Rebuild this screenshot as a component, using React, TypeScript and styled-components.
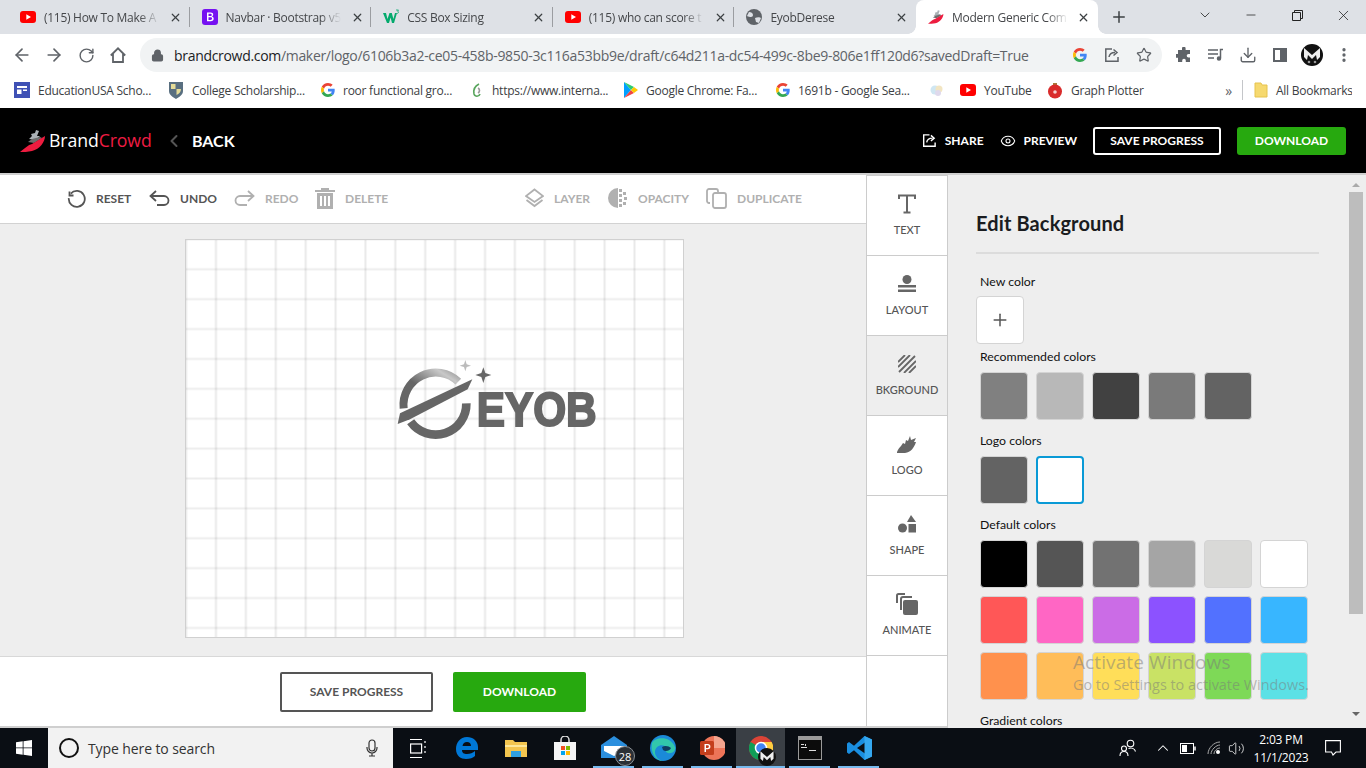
import React from "react";
import styled, { createGlobalStyle } from "styled-components";
import { ArrowLeft, ArrowRight, RotateCw, Lock, Star, MoreVertical, Download, ChevronDown, Minus, X, Plus, ChevronLeft, Eye, ChevronUp, Volume2 } from "lucide-react";

const Global = createGlobalStyle`
  html, body { margin: 0; padding: 0; width: 1366px; height: 768px; overflow: hidden; background: #fff; }
  * { box-sizing: border-box; }
  svg { display: block; flex: none; }
`;
const Page = styled.div`width:1366px;height:768px;display:flex;flex-direction:column;overflow:hidden;position:relative;font-family:"Lato","Liberation Sans",sans-serif;`;
const ui = `"Open Sans","Liberation Sans",sans-serif`;

/* ---------- browser chrome ---------- */
const TabStrip = styled.div`height:34px;flex:none;background:#dee1e6;display:flex;align-items:stretch;padding-left:8px;font-family:${ui};`;
const Tab = styled.div<{ $active?: boolean; $sep?: boolean }>`
  width:181.6px;flex:none;display:flex;align-items:center;padding:0 6px 0 12px;gap:8px;position:relative;
  color:#45474a;font-size:12px;letter-spacing:-.28px;
  background:${p => (p.$active ? "#fff" : "transparent")};
  border-radius:${p => (p.$active ? "8px 8px 0 0" : "0")};
  ${p => p.$sep ? `&::after{content:"";position:absolute;right:0;top:7px;height:20px;width:1px;background:#9b9da1;}` : ""}
  ${p => p.$active ? `
    &::before,&::after{content:"";position:absolute;bottom:0;width:8px;height:8px;}
    &::before{left:-8px;background:radial-gradient(circle at 0 0,transparent 7.5px,#fff 8px);}
    &::after{right:-8px;background:radial-gradient(circle at 100% 0,transparent 7.5px,#fff 8px);}
  ` : ""}
`;
const TabTitle = styled.span`flex:1;min-width:0;white-space:nowrap;overflow:hidden;-webkit-mask-image:linear-gradient(90deg,#000 82%,transparent);mask-image:linear-gradient(90deg,#000 82%,transparent);`;
const TabClose = styled.span`width:16px;height:16px;flex:none;display:flex;align-items:center;justify-content:center;color:#3c4043;`;
const NewTab = styled.div`width:28px;margin-left:7px;display:flex;align-items:center;justify-content:center;color:#3c4043;`;
const WinControls = styled.div`margin-left:auto;display:flex;`;
const WinBtn = styled.div`width:46px;display:flex;align-items:center;justify-content:center;color:#222;padding-bottom:4px;`;
const Toolbar = styled.div`height:40px;flex:none;background:#fff;display:flex;align-items:flex-start;padding:4px 6px 0;font-family:${ui};`;
const RoundBtn = styled.div`width:32px;height:34px;flex:none;display:flex;align-items:center;justify-content:center;color:#5f6368;`;
const UrlPill = styled.div`width:1022px;height:34px;margin:0 6px;flex:none;border-radius:17px;background:#f1f3f4;display:flex;align-items:center;padding-left:11px;padding-right:2px;`;
const UrlText = styled.span`margin-left:10px;flex:1;font-size:14px;letter-spacing:-.31px;color:#5f6368;white-space:nowrap;overflow:hidden;b{font-weight:400;color:#202124;}`;
const Bookmarks = styled.div`height:34px;flex:none;background:#fff;display:flex;align-items:center;padding:0 14px 2px;font-family:${ui};font-size:12px;letter-spacing:-.25px;color:#3c4043;`;
const Bookmark = styled.div<{ $w: number }>`width:${p => p.$w}px;flex:none;display:flex;align-items:center;gap:8px;white-space:nowrap;overflow:hidden;`;
const BarSep = styled.span`width:1px;height:20px;background:#c4c6c9;margin:0 11px 0 9px;`;
const More = styled.span`margin-left:auto;font-size:14px;color:#5f6368;margin-right:1px;`;

/* ---------- brand header ---------- */
const Header = styled.header`height:67px;flex:none;background:#000;border-bottom:2px solid #cfcfcf;display:flex;align-items:center;padding:0 20px;color:#fff;`;
const BrandMark = styled.div`display:flex;align-items:center;gap:3px;width:152px;`;
const BrandWord = styled.span`font-family:${ui};font-size:17.7px;font-weight:500;letter-spacing:-.1px;color:#fff;line-height:1;i{font-style:normal;color:#ee1c43;}`;
const BackLink = styled.div`display:flex;align-items:center;gap:8px;margin-left:-8px;font-size:16px;font-weight:700;`;
const HeadActions = styled.div`margin-left:auto;display:flex;align-items:center;`;
const HeadLink = styled.div`display:flex;align-items:center;gap:8px;font-size:12px;font-weight:700;margin-right:16px;`;
const HeadOutline = styled.div`width:128px;height:28px;border:2px solid #fff;border-radius:3px;display:flex;align-items:center;justify-content:center;font-size:12px;font-weight:700;margin-right:16px;`;
const HeadGreen = styled.div`width:109px;height:28px;background:#27a90f;border-radius:3px;display:flex;align-items:center;justify-content:center;font-size:12px;font-weight:700;`;

/* ---------- editor ---------- */
const Workspace = styled.div`flex:1;min-height:0;display:flex;`;
const EditorCol = styled.div`width:866px;flex:none;display:flex;flex-direction:column;`;
const EditBar = styled.div`height:49px;flex:none;background:#fff;border-bottom:1px solid #d2d2d2;display:flex;align-items:center;padding:0 0 2px 67px;`;
const EditBtn = styled.div<{ $off?: boolean; $w: number }>`width:${p => p.$w}px;flex:none;display:flex;align-items:center;gap:10px;font-size:12px;font-weight:700;color:${p => (p.$off ? "#b0b0b0" : "#555")};`;
const EditGap = styled.div`width:137px;flex:none;`;
const CanvasArea = styled.div`flex:1;min-height:0;background:#eee;display:flex;align-items:center;justify-content:center;padding:0 0 3px 3px;`;
const Canvas = styled.div`
  width:499px;height:399px;position:relative;border:1px solid #d0d0d0;background-color:#fff;
  background-image:
    linear-gradient(90deg,transparent 0,rgba(0,0,0,.085) 1px,rgba(0,0,0,.085) 2px,transparent 3px),
    linear-gradient(transparent 0,rgba(0,0,0,.07) 1px,rgba(0,0,0,.07) 2px,transparent 3px);
  background-size:29.9px 29.9px;background-position:28.5px 27.8px;
`;
const LogoArt = styled.svg`position:absolute;left:184px;top:100px;filter:blur(.4px);`;
const Footer = styled.div`height:72px;flex:none;background:#fff;border-top:1px solid #d8d8d8;border-bottom:2px solid #cfcfcf;display:flex;align-items:center;justify-content:center;gap:20px;`;
const FootOutline = styled.div`width:153px;height:40px;border:2px solid #555;border-radius:2px;display:flex;align-items:center;justify-content:center;font-size:12px;font-weight:700;color:#555;`;
const FootGreen = styled.div`width:133px;height:40px;background:#27a90f;border-radius:2px;display:flex;align-items:center;justify-content:center;font-size:12px;font-weight:700;color:#fff;`;

const ToolRail = styled.nav`width:82px;flex:none;background:#fff;border-left:1px solid #ccc;border-right:1px solid #ccc;border-top:1px solid #ccc;border-bottom:2px solid #cfcfcf;display:flex;flex-direction:column;`;
const ToolItem = styled.div<{ $on?: boolean }>`height:80px;flex:none;display:flex;flex-direction:column;align-items:center;padding-top:16px;border-bottom:1px solid #ccc;background:${p => (p.$on ? "#eee" : "#fff")};font-size:11px;color:#555;font-weight:500;`;
const ToolIcon = styled.div`height:24px;margin-bottom:7px;display:flex;align-items:center;color:#666;`;

const Panel = styled.aside`flex:1;min-width:0;height:553px;background:#eee;position:relative;overflow:hidden;padding:35px 0 0 28px;color:#111;`;
const PanelTitle = styled.h2`margin:0;font-size:20px;font-weight:700;line-height:26px;letter-spacing:.12px;color:#1a1c20;height:29px;width:343px;`;
const Rule = styled.div`width:343px;height:2px;background:#dcdcdc;margin-top:13px;`;
const Label = styled.div`font-size:12.3px;line-height:16px;color:#111;margin-left:4px;`;
const NewLabel = styled(Label)`margin-top:20px;`;
const AddBtn = styled.div`width:48px;height:48px;margin-top:6px;background:#fff;border:1px solid #d4d4d4;border-radius:4px;display:flex;align-items:center;justify-content:center;color:#555;`;
const SectionLabel = styled(Label)`margin-top:5px;`;
const SwatchRow = styled.div`display:flex;gap:8px;margin:7px 0 0 4px;`;
const SwatchGrid = styled.div`display:grid;grid-template-columns:repeat(6,48px);gap:8px;margin:7px 0 13px 4px;`;
const Spacer = styled.div`height:13px;`;
const Swatch = styled.div<{ $c: string; $sel?: boolean }>`width:48px;height:48px;border-radius:4px;background:${p => p.$c};border:${p => (p.$sel ? "2px solid #0a9ad6" : "1px solid #d4d4d4")};`;
const ScrollTrack = styled.div`position:absolute;right:3px;top:0;bottom:0;width:14px;display:flex;flex-direction:column;align-items:center;`;
const ScrollThumb = styled.div`width:14px;height:422px;margin-top:5px;background:#bdbdbd;`;
const Arrow = styled.div<{ $down?: boolean }>`
  width:0;height:0;border-left:4px solid transparent;border-right:4px solid transparent;
  ${p => (p.$down ? "border-top:4px solid #666;margin-top:98px;" : "border-bottom:4px solid #aaa;margin-top:8px;")}
`;
const Watermark = styled.div`position:absolute;left:1073px;top:650px;font-family:${ui};color:rgba(120,120,120,.5);white-space:nowrap;pointer-events:none;`;
const WmTitle = styled.div`font-size:19px;line-height:24px;letter-spacing:.1px;`;
const WmSub = styled.div`font-size:14.4px;line-height:20px;margin-top:1px;`;

/* ---------- taskbar ---------- */
const Taskbar = styled.footer`height:40px;flex:none;background:#0a0e14;display:flex;align-items:stretch;color:#fff;font-family:${ui};`;
const StartBtn = styled.div`width:48px;display:flex;align-items:center;justify-content:center;`;
const SearchBox = styled.div`width:345px;background:#f2f2f2;display:flex;align-items:center;padding-left:11px;color:#333;font-size:14px;letter-spacing:-.1px;`;
const Cortana = styled.span`width:20px;height:20px;border-radius:50%;border:2.5px solid #111;margin-right:9px;flex:none;`;
const MicSlot = styled.span`margin-left:auto;margin-right:15px;color:#333;`;
const TaskBtn = styled.div<{ $open?: boolean; $active?: boolean }>`
  width:49px;flex:none;position:relative;display:flex;align-items:center;justify-content:center;
  background:${p => (p.$active ? "#3a3f45" : "transparent")};
  ${p => p.$open ? `&::after{content:"";position:absolute;left:${p.$active ? 0 : 4}px;right:${p.$active ? 0 : 4}px;bottom:0;height:2px;background:#76b9ed;}` : ""}
`;
const Badge = styled.span`position:absolute;left:26px;top:18px;width:20px;height:20px;border-radius:50%;background:#2b3036;border:1px solid #8a8f95;font-size:11px;display:flex;align-items:center;justify-content:center;color:#fff;`;
const Overlay = styled.span`position:absolute;left:22px;top:20px;`;
const Tray = styled.div`margin-left:auto;display:flex;align-items:center;`;
const TrayIcon = styled.span<{ $w: number }>`width:${p => p.$w}px;display:flex;justify-content:center;`;
const Clock = styled.div`width:70px;margin-left:6px;text-align:center;font-size:12px;line-height:18px;letter-spacing:-.2px;padding-top:1px;white-space:nowrap;`;
const Notify = styled.span`width:34px;margin-right:16px;display:flex;justify-content:center;`;

/* ---------- drawings ---------- */
const YT = () => (<svg width="16" height="16" viewBox="0 0 16 16"><rect y="2" width="16" height="12" rx="3" fill="#f00" /><path d="M6.3 5.2 11 8l-4.7 2.8z" fill="#fff" /></svg>);
const GoogleG = ({ s = 16 }: { s?: number }) => (<svg width={s} height={s} viewBox="0 0 48 48"><path fill="#EA4335" d="M24 9.5c3.5 0 6.700 1.300 9.100 3.500l6.800-6.800C35.800 2.400 30.300 0 24 0 14.600 0 6.500 5.400 2.600 13.200l7.900 6.100C12.400 13.700 17.700 9.500 24 9.500z" /><path fill="#4285F4" d="M47 24.500c0-1.600-.1-3.100-.4-4.500H24v9h13c-.6 3-2.300 5.500-4.800 7.200l7.700 6C44.400 38 47 31.800 47 24.500z" /><path fill="#FBBC05" d="M10.500 28.700c-.5-1.400-.8-3-.8-4.700s.3-3.300.8-4.700l-7.900-6.100C.9 16.500 0 20.100 0 24s.9 7.500 2.600 10.800z" /><path fill="#34A853" d="M24 48c6.500 0 11.900-2.100 15.900-5.800l-7.700-6c-2.100 1.400-4.900 2.300-8.200 2.300-6.300 0-11.600-4.200-13.500-9.800l-7.900 6.100C6.500 42.600 14.600 48 24 48z" /></svg>);
const Swoosh = ({ s = 26, h = 22 }: { s?: number; h?: number }) => (<svg width={s} height={h} viewBox="0 0 26 22"><path d="M9 9 12 6 11 4 15 3 16 0 19 1 17 6 20 6 16 10z" fill="#aab0b5" /><path d="M8 12 12 9 20 7 22 8 14 13z" fill="#6e6e6e" /><path d="M0 22C5 18 8 15 12 14L25 6C25 12 20 19 12 21 8 22 3 22 0 22z" fill="#ed1c3f" /></svg>);
const Globe = () => (<svg width="16" height="16" viewBox="0 0 16 16"><circle cx="8" cy="8" r="8" fill="#5f6368" /><path d="M3 3c2 0 4 1 4 3S5 8 4 8 1 7 1 7zM9 9c2-1 5-1 6 0l-2 5-3-1z" fill="#dee1e6" /></svg>);
const BackIcon = () => <ChevronLeft size={20} strokeWidth={2.4} color="#555" />;
const HomeIcon = () => (<svg width="18" height="18" viewBox="0 0 18 18" fill="none" stroke="#5f6368" strokeWidth="1.8"><path d="M1.800 9.500 9 2.300l7.200 7.200M4 8v8h10V8" /></svg>);
const ShareBox = ({ c = "#5f6368", s = 16 }: { c?: string; s?: number }) => (<svg width={s} height={s} viewBox="0 0 16 16" fill="none" stroke={c} strokeWidth="1.500"><path d="M8 2H1.800v12.200H14V10" /><path d="M5 10c.5-3 3-4.500 6-4.500M9.500 2.500 13 5.500 9.500 8.500" /></svg>);

const GREY = ["#808080", "#b8b8b8", "#414141", "#7a7a7a", "#636363"];
const DEFAULTS = ["#000000", "#555555", "#727272", "#a5a5a5", "#d9d9d7", "#ffffff", "#ff5757", "#ff66c4", "#cb6ce6", "#8c52ff", "#5271ff", "#38b6ff", "#ff914d", "#ffbd59", "#ffde59", "#c9e265", "#7ed957", "#5ce1e6"];
const closeX = <X size={13} strokeWidth={2.2} />;

export default function App() {
  return (
    <Page>
      <Global />
      <TabStrip>
        <Tab $sep><YT /><TabTitle>(115) How To Make A</TabTitle><TabClose>{closeX}</TabClose></Tab>
        <Tab $sep>
          <svg width="16" height="16" viewBox="0 0 16 16"><rect width="16" height="16" rx="3" fill="#7511f1" /><path d="M5 3.500h3.700c1.600 0 2.500.9 2.500 2.100 0 1-.6 1.700-1.500 1.900 1.200.1 2 1 2 2.200 0 1.500-1.100 2.500-2.900 2.500H5zM6.500 4.800v2.300h1.700c1 0 1.500-.4 1.500-1.200s-.5-1.100-1.400-1.100zm0 3.500v2.600h2c1 0 1.600-.5 1.600-1.300s-.6-1.300-1.700-1.300z" fill="#fff" /></svg>
          <TabTitle>Navbar · Bootstrap v5</TabTitle><TabClose>{closeX}</TabClose>
        </Tab>
        <Tab $sep>
          <svg width="16" height="16" viewBox="0 0 16 16"><path d="M0 4h3l1.500 6L6.500 4h2.300l1.600 6L12 4h2l-3 10H9L7.600 8.500 6 14H4z" fill="#04aa6d" /><path d="M13 1h2.500l-1 1.200c.7.100 1 .5 1 1 0 .8-.7 1.200-1.500 1.200" fill="none" stroke="#04aa6d" strokeWidth=".8" /></svg>
          <TabTitle>CSS Box Sizing</TabTitle><TabClose>{closeX}</TabClose>
        </Tab>
        <Tab $sep><YT /><TabTitle>(115) who can score t</TabTitle><TabClose>{closeX}</TabClose></Tab>
        <Tab><Globe /><TabTitle>EyobDerese</TabTitle><TabClose>{closeX}</TabClose></Tab>
        <Tab $active><Swoosh s={16} h={16} /><TabTitle>Modern Generic Com</TabTitle><TabClose>{closeX}</TabClose></Tab>
        <NewTab><Plus size={18} strokeWidth={2} /></NewTab>
        <WinControls>
          <WinBtn><ChevronDown size={16} strokeWidth={1.2} /></WinBtn>
          <WinBtn><Minus size={14} strokeWidth={1.3} /></WinBtn>
          <WinBtn><svg width="11" height="11" viewBox="0 0 11 11" fill="none" stroke="#222"><path d="M.5 2.500h8v8h-8zM2.500 2.500V.5h8v8h-2" /></svg></WinBtn>
          <WinBtn><X size={17} strokeWidth={1.1} /></WinBtn>
        </WinControls>
      </TabStrip>

      <Toolbar>
        <RoundBtn><ArrowLeft size={20} strokeWidth={2} /></RoundBtn>
        <RoundBtn><ArrowRight size={20} strokeWidth={2} /></RoundBtn>
        <RoundBtn><RotateCw size={17} strokeWidth={2} /></RoundBtn>
        <RoundBtn><HomeIcon /></RoundBtn>
        <UrlPill>
          <Lock size={13} strokeWidth={2.6} color="#5f6368" fill="#5f6368" />
          <UrlText><b>brandcrowd.com</b>/maker/logo/6106b3a2-ce05-458b-9850-3c116a53bb9e/draft/c64d211a-dc54-499c-8be9-806e1ff120d6?savedDraft=True</UrlText>
          <RoundBtn><GoogleG s={14} /></RoundBtn>
          <RoundBtn><ShareBox /></RoundBtn>
          <RoundBtn><Star size={16} strokeWidth={1.8} /></RoundBtn>
        </UrlPill>
        <RoundBtn><svg width="16" height="16" viewBox="0 0 16 16" fill="#5f6368"><path d="M6 1.500a1.800 1.800 0 0 1 3.600 0V3H14v4h-1.500a1.800 1.800 0 0 0 0 3.600H14V15H9.800v-1.400a1.800 1.800 0 0 0-3.600 0V15H2v-4.200H.8a1.900 1.900 0 0 1 0-3.800H2V3h4z" /></svg></RoundBtn>
        <RoundBtn><svg width="16" height="16" viewBox="0 0 16 16" fill="none" stroke="#5f6368" strokeWidth="1.500"><path d="M0 3h10M0 7h10M0 11h6M12.500 11V2.500H15" /><circle cx="11" cy="11.500" r="1.500" fill="#5f6368" /></svg></RoundBtn>
        <RoundBtn><Download size={18} strokeWidth={1.8} /></RoundBtn>
        <RoundBtn><svg width="14" height="14" viewBox="0 0 14 14" fill="none" stroke="#5f6368" strokeWidth="2"><rect x="1" y="1" width="12" height="12" /><rect x="8" y="1" width="5" height="12" fill="#5f6368" /></svg></RoundBtn>
        <RoundBtn><svg width="22" height="22" viewBox="0 0 22 22"><circle cx="11" cy="11" r="11" fill="#111" /><path d="M3 4l8 7 8-7v9l-3 3-1-5-4 4-4-4-1 5-3-3z" fill="#eee" /><circle cx="8" cy="18" r="1.300" fill="#999" /><circle cx="14" cy="18" r="1.300" fill="#999" /></svg></RoundBtn>
        <RoundBtn><MoreVertical size={18} strokeWidth={2.4} /></RoundBtn>
      </Toolbar>

      <Bookmarks>
        <Bookmark $w={154}><svg width="16" height="16" viewBox="0 0 16 16"><rect width="16" height="16" fill="#3f51b5" /><path d="M3 4h10v2H3zM3 7.500h4.500V12H3zM9 7.500h4V9H9z" fill="#fff" /></svg>EducationUSA Scho...</Bookmark>
        <Bookmark $w={153}><svg width="16" height="18" viewBox="0 0 16 18"><path d="M1 1h14v9c0 4-4 6-7 8-3-2-7-4-7-8z" fill="#596f80" /><path d="M3 3h4.500v5H3zM8.500 8H13c0 3-2 5-4.500 6z" fill="#e5dc98" /></svg>College Scholarship...</Bookmark>
        <Bookmark $w={149}><GoogleG s={14} />roor functional gro...</Bookmark>
        <Bookmark $w={154}><svg width="14" height="16" viewBox="0 0 14 16" fill="none" strokeWidth="1.600"><path d="M9 2C5 4 3 7 4 12c1 3 5 3 6 0" stroke="#58a55c" /><path d="M8 6c2 1 2 4 0 5" stroke="#999" /></svg>https://www.interna...</Bookmark>
        <Bookmark $w={152}><svg width="14" height="16" viewBox="0 0 14 16"><path d="M0 0v16l7-8z" fill="#00a0ff" /><path d="M0 0l7 8 3-3z" fill="#2dcc70" /><path d="M0 16l7-8 3 3z" fill="#ef4444" /><path d="M10 5l4 3-4 3-3-3z" fill="#ffc900" /></svg>Google Chrome: Fa...</Bookmark>
        <Bookmark $w={153}><GoogleG s={14} />1691b - Google Sea...</Bookmark>
        <Bookmark $w={31}><svg width="16" height="16" viewBox="0 0 16 16"><circle cx="6" cy="8" r="4.500" fill="#cfe6f2" /><circle cx="10" cy="7" r="3.500" fill="#f2e5c2" /><circle cx="9" cy="11" r="3" fill="#dfd9ec" /></svg></Bookmark>
        <Bookmark $w={87}><YT />YouTube</Bookmark>
        <Bookmark $w={100}><svg width="16" height="18" viewBox="0 0 16 18"><path d="M6 2h4v2H6z" fill="#a87a3a" /><ellipse cx="8" cy="10.500" rx="7" ry="7" fill="#d92b2b" /><circle cx="8" cy="11" r="1.800" fill="#f4d0d0" /></svg>Graph Plotter</Bookmark>
        <More>»</More>
        <BarSep />
        <Bookmark $w={98}><svg width="14" height="16" viewBox="0 0 14 16"><path d="M1 1h6l1 2h5v12H1z" fill="#f6d96f" stroke="#e6c34f" /></svg>All Bookmarks</Bookmark>
      </Bookmarks>

      <Header>
        <BrandMark><Swoosh /><BrandWord>Brand<i>Crowd</i></BrandWord></BrandMark>
        <BackLink><BackIcon /><span>BACK</span></BackLink>
        <HeadActions>
          <HeadLink><ShareBox c="#fff" s={15} />SHARE</HeadLink>
          <HeadLink><Eye size={16} strokeWidth={1.6} />PREVIEW</HeadLink>
          <HeadOutline>SAVE PROGRESS</HeadOutline>
          <HeadGreen>DOWNLOAD</HeadGreen>
        </HeadActions>
      </Header>

      <Workspace>
        <EditorCol>
          <EditBar>
            <EditBtn $w={82}><svg width="19" height="19" viewBox="0 0 19 19" fill="none" stroke="#555" strokeWidth="1.800"><path d="M3.800 4.600a8 8 0 1 1-2 4.600" /><path d="M2.500 2.500v4h4" /></svg>RESET</EditBtn>
            <EditBtn $w={85}><svg width="21" height="16" viewBox="0 0 21 16" fill="none" stroke="#555" strokeWidth="1.800"><path d="M7 1 1.500 6 7 11M1.500 6H15a4.500 4.500 0 0 1 0 9H8" /></svg>UNDO</EditBtn>
            <EditBtn $off $w={81}><svg width="21" height="16" viewBox="0 0 21 16" fill="none" stroke="#b0b0b0" strokeWidth="1.800"><path d="M14 1l5.500 5L14 11M19.500 6H6a4.500 4.500 0 0 0 0 9h7" /></svg>REDO</EditBtn>
            <EditBtn $off $w={73}><svg width="20" height="21" viewBox="0 0 20 21" fill="#b0b0b0"><path d="M6 0h8v2h6v2H0V2h6zM2 5h16v16H2zm3 3v10h2V8zm4 0v10h2V8zm4 0v10h2V8z" fillRule="evenodd" /></svg>DELETE</EditBtn>
            <EditGap />
            <EditBtn $off $w={83}><svg width="19" height="20" viewBox="0 0 19 20" fill="none" stroke="#b0b0b0" strokeWidth="1.800"><path d="M9.500 1.500 18 8l-8.500 6L1 8zM1.500 12l8 6 8-6" /></svg>LAYER</EditBtn>
            <EditBtn $off $w={98}><svg width="20" height="20" viewBox="0 0 20 20"><path d="M10 0a10 10 0 0 0 0 20z" fill="#b0b0b0" /><g fill="#b0b0b0"><rect x="11" y="1" width="3" height="3" /><rect x="15" y="4" width="3" height="3" /><rect x="11" y="6" width="3" height="3" /><rect x="16" y="9" width="3" height="3" /><rect x="11" y="11" width="3" height="3" /><rect x="15" y="14" width="3" height="3" /><rect x="11" y="16" width="3" height="3" /></g></svg>OPACITY</EditBtn>
            <EditBtn $off $w={100}><svg width="21" height="21" viewBox="0 0 21 21" fill="none" stroke="#b0b0b0" strokeWidth="1.800"><path d="M4 15H3a2 2 0 0 1-2-2V3a2 2 0 0 1 2-2h7a2 2 0 0 1 2 2v1" /><rect x="7" y="5" width="13" height="15" rx="2" /></svg>DUPLICATE</EditBtn>
          </EditBar>
          <CanvasArea>
            <Canvas>
              <LogoArt width="250" height="110" viewBox="0 0 750 330" role="img" aria-label="EYOB">
                <defs><linearGradient id="arc" x1="0" y1="1" x2="1" y2="0"><stop offset=".45" stopColor="#666" /><stop offset=".85" stopColor="#c8c8c8" /><stop offset="1" stopColor="#999" /></linearGradient></defs>
                <path d="M101 205A97 97 0 0 1 265 125" fill="none" stroke="url(#arc)" strokeWidth="24" />
                <path d="M122 245A92 92 0 0 0 289 190" fill="none" stroke="#666" strokeWidth="26" />
                <path d="M90 220 307 118 293 148 120 238 83 252Z" fill="#666" />
                <path d="M340 82l6 17 18 6-18 6-6 18-6-18-18-6 18-6z" fill="#666" />
                <path d="M286 60l4 13 13 4-13 4-4 13-4-13-13-4 13-4z" fill="#bbb" />
                <text x="320" y="258" fontFamily="Liberation Sans" fontWeight="700" fontSize="143" fill="#666" stroke="#666" strokeWidth="6" textLength="360" lengthAdjust="spacingAndGlyphs">EYOB</text>
              </LogoArt>
            </Canvas>
          </CanvasArea>
          <Footer><FootOutline>SAVE PROGRESS</FootOutline><FootGreen>DOWNLOAD</FootGreen></Footer>
        </EditorCol>

        <ToolRail>
          <ToolItem><ToolIcon><svg width="18" height="20" viewBox="0 0 18 20" fill="none" stroke="#666" strokeWidth="2"><path d="M1 5V1.500h16V5M9 1.500V18.500M5.500 18.500h7" /></svg></ToolIcon>TEXT</ToolItem>
          <ToolItem><ToolIcon><svg width="18" height="18" viewBox="0 0 18 18" fill="#666"><circle cx="9" cy="4.500" r="4.500" /><rect y="10" width="18" height="2.500" /><rect y="14.500" width="18" height="2.500" /></svg></ToolIcon>LAYOUT</ToolItem>
          <ToolItem $on><ToolIcon><svg width="18" height="18" viewBox="0 0 18 18" stroke="#666" strokeWidth="1.800"><path d="M0 7 7 0M0 12 12 0M1 17 17 1M6 18 18 6M11 18 18 11" /></svg></ToolIcon>BKGROUND</ToolItem>
          <ToolItem><ToolIcon><svg width="20" height="18" viewBox="0 0 20 18" fill="#666"><path d="M0 17c1-3 3-5 4-6l2-3 2 1 1-4 2 1 2-5 1 4 5-2-2 4 2 0c-2 6-5 10-11 11-2 1-5 .5-8 .5z" /></svg></ToolIcon>LOGO</ToolItem>
          <ToolItem><ToolIcon><svg width="18" height="18" viewBox="0 0 18 18" fill="#666"><path d="M13 0l5 7h-9z" /><circle cx="4.500" cy="13" r="4.500" /><rect x="10.500" y="9" width="7.500" height="8.500" /></svg></ToolIcon>SHAPE</ToolItem>
          <ToolItem><ToolIcon><svg width="22" height="22" viewBox="0 0 22 22"><rect x="7" y="7" width="15" height="15" rx="2" fill="#666" /><path d="M5 17V6a2 2 0 0 1 2-2h9" fill="none" stroke="#666" strokeWidth="2" /><path d="M1 10V2.500A1.500 1.500 0 0 1 2.500 1H9" fill="none" stroke="#666" strokeWidth="2" /></svg></ToolIcon>ANIMATE</ToolItem>
        </ToolRail>

        <Panel>
          <PanelTitle>Edit Background</PanelTitle>
          <Rule />
          <NewLabel>New color</NewLabel>
          <AddBtn><Plus size={20} strokeWidth={1.8} /></AddBtn>
          <SectionLabel>Recommended colors</SectionLabel>
          <SwatchRow>{GREY.map(c => <Swatch key={c} $c={c} />)}</SwatchRow>
          <Spacer />
          <Label>Logo colors</Label>
          <SwatchRow><Swatch $c="#636363" /><Swatch $c="#fff" $sel /></SwatchRow>
          <Spacer />
          <Label>Default colors</Label>
          <SwatchGrid>{DEFAULTS.map(c => <Swatch key={c} $c={c} />)}</SwatchGrid>
          <Label>Gradient colors</Label>
          <ScrollTrack><Arrow /><ScrollThumb /><Arrow $down /></ScrollTrack>
        </Panel>
      </Workspace>

      <Taskbar>
        <StartBtn><svg width="16" height="16" viewBox="0 0 16 16" fill="#fff"><path d="M0 2.300 6.700 1.300v6.200H0zM7.500 1.200 16 0v7.500H7.500zM0 8.300h6.700v6.400L0 13.700zM7.500 8.300H16V16l-8.500-1.200z" /></svg></StartBtn>
        <SearchBox><Cortana />Type here to search<MicSlot><svg width="12" height="18" viewBox="0 0 12 18" fill="none" stroke="#333" strokeWidth="1.200"><rect x="3" y="1" width="6" height="11" rx="3" /><path d="M1 8v1a5 5 0 0 0 10 0V8M6 14v3M3 17h6" /></svg></MicSlot></SearchBox>
        <TaskBtn><svg width="16" height="19" viewBox="0 0 16 19" fill="none" stroke="#fff" strokeWidth="1.200"><path d="M0 .5h12M0 18.500h12" /><rect x=".6" y="5" width="11" height="9" /><path d="M15 2v2M15 7v2M15 12v2" /></svg></TaskBtn>
        <TaskBtn><svg width="22" height="24" viewBox="0 0 22 24"><path d="M11 1C4 1 0 7 0 13c0 7 5 10 10 10 4 0 7-1 9-3v-5c-2 2-5 3-8 3-3 0-5-1-5-4h16v-3C22 5 17 1 11 1zM6.500 10c.4-2.500 2-4 4.500-4s4 1.500 4 4z" fill="#0078d7" /></svg></TaskBtn>
        <TaskBtn><svg width="22" height="20" viewBox="0 0 22 20"><path d="M0 2h8l2 2h12v15H0z" fill="#f3c54f" /><path d="M0 7h22v2H0z" fill="#fde79a" /><path d="M6 13h10v6H6z" fill="#2f9fe0" /></svg></TaskBtn>
        <TaskBtn><svg width="24" height="24" viewBox="0 0 24 24"><path d="M8 7V4a4 4 0 0 1 8 0v3" fill="none" stroke="#ddd" strokeWidth="1.500" /><rect x="1" y="6" width="22" height="18" fill="#f5f5f5" /><rect x="8" y="10" width="4" height="4" fill="#f25022" /><rect x="13" y="10" width="4" height="4" fill="#7fba00" /><rect x="8" y="15" width="4" height="4" fill="#00a4ef" /><rect x="13" y="15" width="4" height="4" fill="#ffb900" /></svg></TaskBtn>
        <TaskBtn $open><svg width="26" height="24" viewBox="0 0 26 24"><path d="M0 9 13 0l13 9v13H0z" fill="#2b8fde" /><path d="M3 10h20v5l-10 5-10-5z" fill="#fff" /></svg><Badge>28</Badge></TaskBtn>
        <TaskBtn $open><svg width="26" height="26" viewBox="0 0 26 26"><circle cx="13" cy="13" r="13" fill="#1b8ad8" /><path d="M2 8C5 2 20 0 25 12c1 4-3 7-7 6-3-1-3-4-1-5-3-5-12-3-12 4 0 4 3 8 8 9C6 26 0 18 2 8z" fill="#32c7ab" /><path d="M12 12c3-2 7-1 9 1-1 3-6 4-8 2z" fill="#0f3d61" /></svg></TaskBtn>
        <TaskBtn $open><svg width="26" height="26" viewBox="0 0 26 26"><circle cx="15" cy="13" r="12" fill="#ed7458" /><path d="M15 13V1a12 12 0 0 1 12 12z" fill="#f4a58f" /><rect x="1" y="6" width="14" height="14" rx="1.500" fill="#c43e1c" /><path d="M5.500 9h3.300a2.600 2.600 0 0 1 0 5.200H7V17H5.500zM7 10.300v2.600h1.600a1.300 1.300 0 0 0 0-2.600z" fill="#fff" /></svg></TaskBtn>
        <TaskBtn $open $active><svg width="24" height="24" viewBox="0 0 24 24"><circle cx="12" cy="12" r="12" fill="#db4437" /><path d="M12 12 1.600 6A12 12 0 0 0 12 24l5-8z" fill="#0f9d58" /><path d="M12 6h10.600A12 12 0 0 1 12 24l5.200-9z" fill="#ffcd40" /><circle cx="12" cy="12" r="5.500" fill="#4285f4" stroke="#fff" strokeWidth="1.500" /></svg><Overlay><svg width="18" height="18" viewBox="0 0 22 22"><circle cx="11" cy="11" r="11" fill="#111" /><path d="M3 4l8 7 8-7v9l-3 3-1-5-4 4-4-4-1 5-3-3z" fill="#eee" /></svg></Overlay></TaskBtn>
        <TaskBtn $open><svg width="24" height="24" viewBox="0 0 24 24"><rect width="24" height="24" fill="#9a9a9a" /><rect x="1" y="4" width="22" height="19" fill="#0c0c0c" /><path d="M3 8h3v1H3zM7 8h1v2H7zM3 11h6v1H3zM11 14h7v1h-7z" fill="#ddd" /></svg></TaskBtn>
        <TaskBtn $open><svg width="26" height="26" viewBox="0 0 26 26"><path d="M18.500 1 26 4.500v17L18.500 25 8 15.200 3 19l-2-1.500v-9L3 7l5 3.800z" fill="#1a8ee0" /><path d="M19 7.500 11 13l8 5.500z" fill="#0a0e14" /><path d="M18.500 1 26 4.500v17L18.500 25z" fill="#35a8f0" /></svg></TaskBtn>
        <Tray>
          <TrayIcon $w={35}><svg width="18" height="18" viewBox="0 0 18 18" fill="none" stroke="#fff" strokeWidth="1.100"><circle cx="11.500" cy="4.500" r="3.300" /><circle cx="5" cy="9.500" r="2.500" /><path d="M1 17c0-3 2-4.500 4-4.500S9 14 9 17M9.500 9.500c3-1 6 0 7 3" /></svg></TrayIcon>
          <TrayIcon $w={35}><ChevronUp size={18} strokeWidth={1.400} /></TrayIcon>
          <TrayIcon $w={16}><svg width="16" height="11" viewBox="0 0 16 11" fill="none" stroke="#fff"><rect x=".5" y=".5" width="13" height="10" /><rect x="2" y="2" width="5" height="7" fill="#fff" stroke="none" /><path d="M15 3.500v4" strokeWidth="1.500" /></svg></TrayIcon>
          <TrayIcon $w={36}><svg width="14" height="14" viewBox="0 0 14 14" fill="none" stroke="#aaa" strokeWidth="1"><path d="M1 13C1 7 7 1 13 1M4 13c0-4 5-9 9-9M7 13c0-3 3-6 6-6" /><circle cx="11" cy="11" r="2" fill="#fff" stroke="none" /></svg></TrayIcon>
          <TrayIcon $w={8}><Volume2 size={17} strokeWidth={1.100} /></TrayIcon>
          <Clock>2:03 PM<br />11/1/2023</Clock>
          <Notify><svg width="16" height="16" viewBox="0 0 16 16" fill="none" stroke="#fff" strokeWidth="1.100"><path d="M.6.6h14.800v11.400H11l-3 3-1.500-3H.6z" /></svg></Notify>
        </Tray>
      </Taskbar>

      <Watermark><WmTitle>Activate Windows</WmTitle><WmSub>Go to Settings to activate Windows.</WmSub></Watermark>
    </Page>
  );
}
